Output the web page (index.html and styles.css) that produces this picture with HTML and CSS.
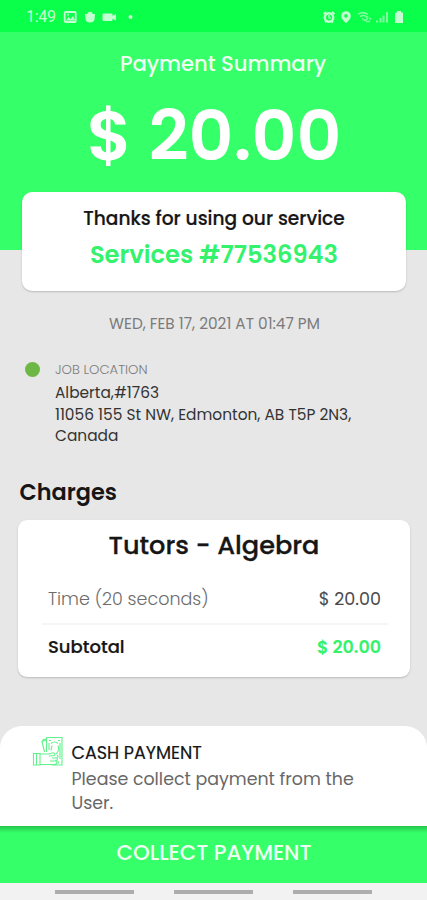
FILE: index.html
```
<!DOCTYPE html>
<html lang="en">
<head>
<meta charset="utf-8">
<title>Payment Summary</title>
<link rel="stylesheet" href="styles.css">
</head>
<body>
<div class="screen">
  <div class="status">
    <span class="clock">1:49</span>
    <svg class="status-left" width="74" height="14" viewBox="0 0 74 14">
      <rect x="1.700" y="2" width="11" height="10" rx="1" fill="none" stroke="currentColor" stroke-width="1.800"/>
      <path d="M3 10.500 5.500 7l2 2 2.500-3 2 4.500z" fill="currentColor"/>
      <circle cx="5" cy="4.700" r="1" fill="currentColor"/>
      <path d="M22 4h2.500C24.500 1 29.500 1 29.500 4H32l-.5 5.500c-.3 4-8.500 4-9 0z" fill="currentColor"/>
      <rect x="39.500" y="3.500" width="10" height="7.500" rx="1" fill="currentColor"/>
      <path d="m49 6 4-2v6.500l-4-2z" fill="currentColor"/>
      <circle cx="67.500" cy="7" r="2" fill="currentColor"/>
    </svg>
    <svg class="status-right" width="84" height="14" viewBox="0 0 84 14">
      <g fill="none" stroke="currentColor">
        <circle cx="7" cy="7.500" r="4.200" stroke-width="2.400"/>
        <path d="M7 5v3h2" stroke-width="1.200"/>
        <path d="m1.500 4 2.500-2M12.500 4 10 2M3 12.500l1.500-1.500M11 12.500 9.500 11" stroke-width="1.800"/>
      </g>
      <path fill="currentColor" fill-rule="evenodd" d="M24 1.200a4.800 4.800 0 0 1 4.800 4.800c0 3-4.800 7.300-4.800 7.300S19.200 9 19.200 6A4.800 4.800 0 0 1 24 1.200zm0 2.900a1.800 1.800 0 1 0 0 3.600 1.800 1.800 0 0 0 0-3.600z"/>
      <g fill="none" stroke="currentColor" opacity=".65">
        <path d="M36 4q5-3 10 .5M38 6.500q4-2 7 .5M40 8.500l3 2 3-2" stroke-width="1.500"/>
        <path d="m44 8 2-1.500M44 11.500h4M47 7.500l2 2" stroke-width="1.500"/>
      </g>
      <path fill="currentColor" opacity=".65" d="M54 10.500h2v2h-2zM57.500 8h2v4.500h-2zM60.500 5.500h2v7h-2zM64 2h2v10.500h-2z"/>
      <path fill="currentColor" d="M73 2.500H75V1h4v1.500h2v10.500h-8z"/>
    </svg>
  </div>

  <header class="hero">
    <h1 class="title">Payment Summary</h1>
    <div class="amount">$ 20.00</div>
  </header>

  <section class="thanks">
    <div class="thanks-text">Thanks for using our service</div>
    <div class="service-id">Services #77536943</div>
  </section>

  <div class="date">WED, FEB 17, 2021 AT 01:47 PM</div>

  <section class="location">
    <i class="dot"></i>
    <div>
      <div class="location-label">JOB LOCATION</div>
      <div class="address">
        <div>Alberta,#1763</div>
        <div>11056 155 St NW, Edmonton, AB T5P 2N3,</div>
        <div>Canada</div>
      </div>
    </div>
  </section>

  <h2 class="charges-title">Charges</h2>
  <section class="charges">
    <h3 class="job">Tutors - Algebra</h3>
    <div class="row"><span class="time">Time (20 seconds)</span><span class="price">$ 20.00</span></div>
    <div class="row total"><span class="subtotal">Subtotal</span><span class="sum">$ 20.00</span></div>
  </section>

  <section class="cash">
    <svg class="cash-icon" width="32" height="32" viewBox="0 0 32 32" fill="none" stroke="currentColor">
      <path d="M14.500 1.500h15.500v27.500H20M14.500 1.500V16"/>
      <path d="M14.500 4 10 5.500l2.500 10.500M10 5.500l1.500-2 3-.5M17 4.500h2M26 4.500h2M28 7v16M17 7v7"/>
      <path d="M19 7.500q3.500-3 7 0M20 9.500l-1 5M26 9.500q2 5-2 8.500"/>
      <path d="M1.500 17.500H8v11.500H1.500zM4.500 17.500V29M8 18h9l3-1h2q2 1 0 2.500l-5 .5M8 28.500h14q3 0 3-2t-1.500-2.500M20 22h5q2-1.500 0-3M18 25h6q2-1 1-3M26.500 25.500v2"/>
    </svg>
    <div>
      <div class="cash-title">CASH PAYMENT</div>
      <div class="cash-text"><div>Please collect payment from the</div><div>User.</div></div>
    </div>
  </section>

  <div class="collect">COLLECT PAYMENT</div>
  <nav class="nav"><i></i><i></i><i></i></nav>
</div>
</body>
</html>
```
FILE: styles.css
```
* { box-sizing: border-box; }
body {
  margin: 0;
  font-family: Poppins, Inter, "Liberation Sans", sans-serif;
  color: #161616;
}
h1, h2, h3 { margin: 0; }
.screen {
  width: 427px;
  height: 900px;
  display: flex;
  flex-direction: column;
  background: #e7e7e7;
  overflow: hidden;
  white-space: nowrap;
}
.status {
  height: 32px;
  flex: none;
  display: flex;
  align-items: center;
  padding: 2px 21px 0 26px;
  background: #09ff49;
  color: #c4ffd2;
}
.clock { width: 37px; font: 16px/20px Roboto, sans-serif; letter-spacing: -.3px; }
.status-right { margin-left: auto; }
.hero {
  height: 218px;
  flex: none;
  background: #35ff69;
  color: #fff;
  text-align: center;
}
.title { padding: 16px 0 0 19px; font-size: 21.100px; line-height: 31px; font-weight: 500; color: #edfff1; }
.amount { margin-top: 14px; padding-left: 1px; font-size: 69.500px; line-height: 86px; font-weight: 600; }
.thanks {
  flex: none;
  height: 99px;
  margin: -58px 21px 0 22px;
  padding-top: 13px;
  border-radius: 10px;
  background: #fff;
  box-shadow: 0 1px 2px rgba(0, 0, 0, .2);
  text-align: center;
}
.thanks-text { font-size: 18.600px; line-height: 27px; font-weight: 500; -webkit-text-stroke: .2px; }
.service-id { margin-top: 5px; font-size: 24.200px; line-height: 36px; font-weight: 600; color: #35f26d; }
.date { margin-top: 21px; padding-left: 2px; text-align: center; font-size: 15.300px; line-height: 24px; color: #7b7b7b; }
.location { display: flex; margin-top: 24px; height: 86px; }
.dot { width: 15px; height: 15px; margin: 2px 15px 0 25px; border-radius: 50%; background: #6db844; }
.location-label { font-size: 13.200px; line-height: 20px; font-weight: 300; color: #7c7c7c; }
.address { margin-top: 2px; font-size: 15.400px; line-height: 21.500px; color: #333; }
.charges-title { margin: 30px 0 0 19.500px; font-size: 22.400px; line-height: 32px; font-weight: 600; }
.charges {
  flex: none;
  height: 157px;
  margin: 12px 17px 0 18px;
  padding: 6px 22px 0 24px;
  border-radius: 9px;
  background: #fff;
  box-shadow: 0 1px 2px rgba(0, 0, 0, .2);
}
.job { padding-right: 2px; font-size: 25.600px; line-height: 38px; font-weight: 500; text-align: center; -webkit-text-stroke: .3px; }
.row { display: flex; justify-content: space-between; height: 39px; padding: 0 7px 0 6px; font-size: 17.500px; line-height: 30px; color: #6c6c6c; }
.job + .row { margin-top: 20px; }
.time { font-weight: 300; }
.price { color: #4a4a4a; }
.total { border-top: 2px solid #f5f5f5; padding-top: 7px; color: #161616; font-weight: 500; }
.subtotal { font-size: 18px; -webkit-text-stroke: .2px; }
.sum { color: #35f26d; font-weight: 600; }
.cash {
  flex: none;
  height: 100px;
  margin-top: 49px;
  padding: 10px 0 0 31.500px;
  display: flex;
  border-radius: 22px 22px 0 0;
  background: #fff;
}
.cash-icon { flex: none; margin-right: 8px; color: #62f18b; stroke-width: 1.100; }
.cash-title { margin-top: 5px; font-size: 17.500px; line-height: 24px; -webkit-text-stroke: .2px; }
.cash-text { margin-top: 2px; font-size: 17.400px; line-height: 24px; color: #686868; }
.collect {
  flex: none;
  height: 57px;
  background: linear-gradient(#24c64d, #35ff69 7px);
  color: #edfff1;
  padding-left: 1px;
  font-size: 21.300px;
  line-height: 54px;
  font-weight: 500;
  text-align: center;
}
.nav { flex: 1; display: flex; gap: 40px; padding: 7px 0 0 55px; background: #f2f2f2; }
.nav i { width: 79px; height: 4px; background: #adadad; }
```
